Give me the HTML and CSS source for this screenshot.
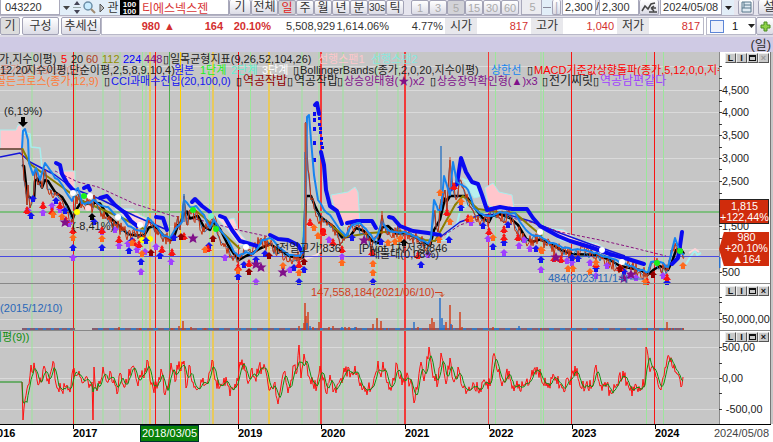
FILE: index.html
```html
<!DOCTYPE html>
<html lang="ko">
<head>
    <meta charset="UTF-8">
    <meta name="viewport" content="width=device-width, initial-scale=1.0">
    <title>티에스넥스젠 043220</title>
    <link rel="stylesheet" href="styles.css">
</head>
<body>
    <div class="toolbar top">
        <input class="code" type="text" value="043220" aria-label="종목코드">
        <button class="tool caret" aria-label="종목 목록"><svg width="7" height="4"><path d="M0 0h7L3.500 4z" fill="#444"/></svg></button>
        <button class="tool spin" aria-label="이전 다음"><svg width="8" height="14"><path d="M1 4h6L4 0zM1 9h6L4 13z" fill="#445"/><path d="M0 6.500h8" stroke="#9aa"/></svg></button>
        <button class="tool find" aria-label="검색"><svg width="13" height="13"><circle cx="5" cy="5" r="4" fill="#c8ecff" stroke="#6d8fa8" stroke-width="1.500"/><path d="M8 8l4 4" stroke="#a08a70" stroke-width="2"/></svg></button>
        <button class="tool next" aria-label="다음"><svg width="6" height="10"><path d="M1 1v8l4-4z" fill="#bbb" stroke="#555"/></svg></button>
        <button class="tool fav">관</button>
        <button class="tool hundred"><span>100</span><span>100</span></button>
        <input class="name" type="text" value="티에스넥스젠" aria-label="종목명">
        <button class="btn w22">기</button>
        <button class="btn w27">전체</button>
        <div class="group periods">
            <button class="on red">일</button><button>주</button><button>월</button><button>년</button><button>분</button><button class="small">30s</button><button>틱</button>
        </div>
        <div class="group minutes">
            <button disabled>1</button><button disabled>3</button><button class="on" disabled>5</button><button disabled>15</button><button disabled>30</button><button disabled>60</button>
        </div>
        <input class="minute" type="text" value="5" disabled aria-label="분 단위">
        <button class="tool spin" aria-label="분 조절"><svg width="8" height="14"><path d="M0 6.500h8" stroke="#889"/></svg></button>
        <button class="btn thin" aria-label="적용">|</button>
        <input class="count" type="text" value="2,300" aria-label="표시 봉수">
        <span class="slash">/</span>
        <input class="count total" type="text" value="2,300" aria-label="전체 봉수">
        <button class="btn w20" aria-label="차트 이동"><svg width="17" height="13"><path d="M1 10l3-5 3 3 3-5 4-1M10 7h5M10 7l3-2M10 7l3 3M8 11h8" fill="none" stroke="#444" stroke-width="1.500"/></svg></button>
        <input class="date" type="text" value="2024/05/08" aria-label="기준일">
        <button class="tool caret" aria-label="날짜 선택"><svg width="7" height="4"><path d="M0 0h7L3.500 4z" fill="#222"/></svg></button>
        <button class="btn print" aria-label="인쇄"><svg width="11" height="12"><path d="M1 1h9v10H1zM3 4h7M1 7h9M3 1v6" fill="#dfeaf2" stroke="#59798c"/></svg></button>
        <button class="btn w22">설</button>
    </div>

    <div class="toolbar quote">
        <button class="btn gray">기</button>
        <button class="btn wide">구성</button>
        <button class="btn wide2">추세선</button>
        <div class="prices">
            <b class="price">980</b><b class="up">▲</b><b class="diff">164</b><b class="rate">20.10%</b>
            <span class="volume">5,508,929</span><span class="ratio">1,614.06%</span><span class="turn">4.77%</span>
            <span class="tag">시가</span><span class="num">817</span>
            <span class="tag">고가</span><span class="num">1,040</span>
            <span class="tag">저가</span><span class="num">817</span>
        </div>
        <div class="layout">
            <label class="swatch"><input type="checkbox" aria-label="분할"></label>
            <select aria-label="분할 개수"><option>1</option></select>
            <svg class="arrow" width="7" height="4"><path d="M0 0h7L3.500 4z" fill="#222"/></svg>
        </div>
        <button class="btn plus" aria-label="추가"><svg width="11" height="11"><path d="M4 1h3v3h3v3H7v3H4V7H1V4h3z" fill="#8fd24a" stroke="#4b8c22"/></svg></button>
    </div>

    <div class="titlebar">(일)</div>

    <main class="chart">
        <section class="pane">
            <svg class="plot" id="price" viewBox="0 52 719 233"></svg>
            <div class="scale">
                <div class="winbtns"><button>L</button><button>I</button><button><i></i></button><button class="off">×</button></div>
                <svg id="priceScale" viewBox="719 52 52 233" preserveAspectRatio="none"></svg>
            </div>
        </section>
        <section class="pane">
            <svg class="plot" id="volume" viewBox="0 285 719 46"></svg>
            <div class="scale">
                <div class="winbtns"><button>L</button><button>I</button><button><i></i></button><button>×</button></div>
                <svg id="volumeScale" viewBox="719 285 52 46" preserveAspectRatio="none"></svg>
            </div>
        </section>
        <section class="pane">
            <svg class="plot" id="cci" viewBox="0 331 719 93"></svg>
            <div class="scale">
                <div class="winbtns"><button>L</button><button>I</button><button><i></i></button><button>×</button></div>
                <svg id="cciScale" viewBox="719 331 52 93" preserveAspectRatio="none"></svg>
            </div>
        </section>
        <svg class="timeline" id="timeline" viewBox="0 424 773 18"></svg>
    </main>

    <script src="chart.js"></script>
</body>
</html>
```
FILE: styles.css
```css
* {
    box-sizing: border-box;
}

body {
    margin: 0;
    background: #e6e5ee;
    font-family: "Liberation Sans", "Noto Sans CJK KR", sans-serif;
    font-size: 11px;
    color: #333;
    overflow: hidden;
}

button,
input,
select {
    font: inherit;
    color: inherit;
    padding: 0;
    margin: 0;
    border: 1px solid #a9a9bb;
    border-radius: 0;
    background: #fff;
    flex: none;
}

button {
    display: flex;
    align-items: center;
    justify-content: center;
    line-height: 12px;
    white-space: nowrap;
}

.toolbar {
    display: flex;
    align-items: stretch;
    overflow: hidden;
    white-space: nowrap;
}

.top {
    height: 16px;
    border-bottom: 1px solid #b5b4c4;
}

.top button,
.top input {
    height: 15px;
    border-top: 0;
}

.top input {
    padding-left: 2px;
    line-height: 14px;
}

.btn,
.group button {
    background: linear-gradient(#fff, #dcdce6);
    border: 1px solid #a3a3b6;
    border-radius: 2px;
    font-size: 12px;
}

.top .code {
    width: 60px;
    padding-left: 4px;
}

.tool {
    background: #e2eef8;
    border: 0;
}

.caret { width: 12px; }
.spin { width: 10px; }
.find { width: 15px; }
.next { width: 9px; }

.fav {
    width: 14px;
    font-size: 12px;
}

.hundred {
    width: 19px;
    flex-direction: column;
    background: #000;
    color: #fff;
    font-size: 8px;
    font-weight: bold;
    line-height: 7px;
}

.name {
    width: 90px;
    color: #d83434;
    font-size: 12px;
}

.w20 { width: 20px; }
.w22 { width: 22px; }
.w27 { width: 27px; }

.group {
    display: flex;
    flex: none;
}

.group button { width: 18px; }

.group .small { font-size: 10px; }

.group .on {
    background: #d3d3d8;
}

.red { color: #e02020; }

.periods {
    margin-right: 7px;
}

.minutes button {
    color: #aaa;
    font-size: 11px;
}

.minute {
    width: 21px;
    margin-left: 2px;
    text-align: center;
    color: #aaa;
    background: #ececf0;
}

.thin {
    width: 9px;
    color: #aab;
    margin-right: 1px;
}

.count {
    width: 34px;
}

.slash {
    width: 9px;
    text-align: center;
}

.total { width: 40px; }

.date {
    width: 62px;
    margin-left: 1px;
}

.print {
    width: 16px;
    margin: 0 4px;
}

.quote {
    height: 20px;
    margin-top: 1px;
    background: #fff;
    border-bottom: 2px solid #dddbe6;
}

.gray {
    width: 20px;
    background: #ddd;
    margin-right: 2px;
}

.wide {
    width: 37px;
    margin-right: 2px;
}

.wide2 { width: 40px; }

.prices {
    flex: 1;
    display: flex;
    align-items: center;
    justify-content: flex-end;
    border: 1px solid #b9b9c8;
    line-height: 16px;
}

.prices b {
    color: #d33030;
    text-align: right;
}

.price { width: 58px; }
.up { width: 15px; }
.diff { width: 48px; }
.rate { width: 48px; }
.volume { width: 64px; text-align: right; }
.ratio { width: 54px; text-align: right; }
.turn { width: 54px; text-align: right; margin-right: 2px; }

.tag {
    width: 32px;
    background: #e8e8ec;
    text-align: center;
    font-size: 12px;
}

.num {
    width: 54px;
    padding-right: 3px;
    text-align: right;
    color: #d33030;
}

.layout {
    display: flex;
    align-items: center;
    width: 52px;
    margin-left: 2px;
    border: 1px solid #b9b9c8;
}

.swatch input {
    display: block;
    appearance: none;
    width: 14px;
    height: 13px;
    margin: 0 8px 0 3px;
    border: 1px solid #5d86d6;
    background: #eef1fb;
}

.layout select {
    appearance: none;
    border: 0;
    width: 16px;
    color: #111;
}

.plus {
    width: 18px;
}

.titlebar {
    height: 15px;
    background: #cfcae4;
    text-align: right;
    padding-right: 2px;
    font-size: 13px;
    line-height: 15px;
}

.chart {
    border-bottom: 1px solid #333;
}

.pane {
    display: grid;
    grid-template-columns: 1fr 52px;
    padding-right: 2px;
    background: #c6c6c6;
}

.plot {
    display: block;
    width: 100%;
    background: #c6c6c6;
}

.scale {
    position: relative;
    background: #fff;
    border-right: 1px solid #777;
}

.scale svg {
    display: block;
    position: absolute;
    width: 100%;
    height: 100%;
}

.winbtns {
    position: absolute;
    z-index: 1;
    top: 1px;
    right: 1px;
    display: flex;
}

.winbtns button {
    width: 11px;
    height: 10px;
    font-size: 9px;
    font-weight: bold;
    line-height: 8px;
    color: #111;
    background: #c9c9c9;
    border: 1px solid #555;
    border-top-color: #eee;
    border-left-color: #eee;
}

.winbtns i {
    width: 7px;
    height: 6px;
    border: 1px solid #111;
    border-top-width: 2px;
}

.winbtns .off {
    color: #999;
}

.timeline {
    display: block;
    width: 100%;
    background: #fff;
}

svg text {
    font-size: 11px;
    white-space: pre;
}

svg .ko {
    font-size: 12px;
}

.year {
    font-weight: bold;
    fill: #000;
}
```
FILE: chart.js
```javascript
const redLines = [73.5, 155.5, 238.5, 321, 405, 488.5, 571.5, 654.5];
const greenLines = [32, 75, 103, 120, 142.5, 146, 209.5, 250.5, 302, 319, 343, 377, 398, 495.5, 541, 543.5, 646.5, 663.5];
const goldLines = [150, 180.5, 213, 269];

function draw(id, html) {
    document.getElementById(id).innerHTML += html;
}

function line(x1, y1, x2, y2, color, width = 1, extra = '') {
    return `<path d="M${x1} ${y1}L${x2} ${y2}" stroke="${color}" stroke-width="${width}" ${extra}/>`;
}

function poly(points, color, width = 1, extra = '') {
    return `<polyline points="${points.join(' ')}" fill="none" stroke="${color}" stroke-width="${width}" stroke-linejoin="round" ${extra}/>`;
}

function area(points, color) {
    return `<polygon points="${points.join(' ')}" fill="${color}" stroke="#a8eeee"/>`;
}

function text(x, y, value, color = '#222', extra = '') {
    return `<text x="${x}" y="${y}" fill="${color}" ${extra}>${value}</text>`;
}

function ko(x, y, value, color = '#222') {
    return text(x, y, value, color, 'class="ko"');
}

// same sequence on every load
let seed = 7;
function rnd() {
    seed = (seed * 16807) % 2147483647;
    return seed / 2147483647;
}

// walk along the points, adding jitter
function jitter(points, amp, step = 1) {
    const out = [];
    for (let i = 0; i < points.length - 1; i++) {
        const [x1, y1] = points[i];
        const [x2, y2] = points[i + 1];
        out.push([x1, y1]);
        for (let x = x1 + step; x < x2; x += step) {
            const y = y1 + (y2 - y1) * (x - x1) / (x2 - x1);
            out.push([x, (y + (rnd() - 0.5) * amp).toFixed(1)]);
        }
    }
    out.push(points[points.length - 1]);
    return out;
}

function smooth(points, span) {
    return points.map((p, i) => {
        const part = points.slice(Math.max(0, i - span), i + 1);
        return [p[0], (part.reduce((s, q) => s + Number(q[1]), 0) / part.length).toFixed(1)];
    });
}

function background(top, bottom, rows) {
    let s = rows.map(y => line(0, y, 719, y, '#dadada')).join('');
    s += greenLines.map(x => line(x, top, x, bottom, '#9be69b')).join('');
    s += goldLines.map((x, i) => line(x, top, x, bottom, i === 1 ? '#ffd000' : '#e8c95c', i === 1 ? 1 : 2)).join('');
    s += redLines.map((x, i) => line(x, top, x, bottom, i > 2 && i < 6 ? '#f23a3a' : '#f81414', i === 3 || i === 4 ? 2 : 1)).join('');
    return s + line(169.5, top, 169.5, bottom, '#50b050');
}

// ---- price ----
const trend = [[22,148],[23,131],[25,129],[28,140],[29,163],[33,175],[36,168],[40,180],[45,163],[50,170],[55,178],[60,182],[66,192],[72,201],[76,190],[78,188],[82,203],[90,203],[94,200],[100,205],[108,207],[116,215],[122,218],[128,226],[136,230],[144,232],[148,218],[152,222],[158,228],[164,236],[170,238],[176,228],[182,222],[184,200],[190,207],[196,206],[204,215],[210,228],[214,220],[220,230],[228,240],[234,252],[238,256],[246,252],[252,254],[258,248],[262,240],[270,238],[280,248],[290,255],[300,256],[303,250],[306,190],[307,117],[309,115],[311,140],[314,175],[318,200],[324,210],[332,218],[340,230],[346,236],[352,225],[360,223],[368,232],[374,240],[378,234],[382,222],[388,230],[395,232],[405,232],[412,235],[420,240],[428,244],[431,238],[434,200],[438,210],[441,210],[444,176],[450,195],[453,162],[457,182],[460,184],[468,190],[474,208],[482,214],[490,216],[500,212],[510,214],[515,213],[520,222],[526,230],[532,235],[540,236],[550,243],[560,246],[572,250],[585,250],[598,254],[610,258],[620,262],[630,266],[640,270],[648,272],[651,262],[660,262],[668,267],[672,250],[675,238],[679,250],[684,255]];

const candles = [[22,150],[24,180],[27,205],[28,185],[30,208],[34,190],[35,170],[38,185],[42,188],[45,170],[48,190],[55,192],[62,200],[68,212],[73,222],[76,196],[82,204],[88,202],[93,208],[94,195],[100,210],[108,220],[116,224],[122,231],[128,235],[136,234],[144,235],[149,218],[155,232],[164,238],[171,240],[174,232],[178,216],[180,230],[184,196],[187,225],[190,210],[198,220],[204,232],[210,226],[213,216],[220,240],[228,248],[234,258],[239,260],[246,250],[252,255],[260,240],[270,246],[280,253],[290,258],[303,255],[305,190],[306,122],[308,170],[311,200],[315,210],[320,221],[328,222],[334,230],[342,243],[350,228],[356,226],[364,234],[372,246],[378,238],[382,215],[388,235],[396,230],[405,234],[415,238],[424,244],[430,246],[434,212],[438,232],[440,205],[445,190],[447,210],[450,160],[453,190],[457,198],[460,180],[466,198],[474,213],[482,220],[489,222],[492,208],[500,218],[510,216],[518,232],[526,243],[532,239],[540,238],[550,246],[560,251],[572,255],[585,252],[598,256],[610,262],[620,268],[630,266],[640,272],[648,275],[654,262],[660,268],[668,270],[672,252],[676,246],[680,248],[684,258]];

// slow average stays below the spikes
const slow = smooth(candles, 1).map(([x, y]) => {
    let top = 165;
    if (x > 300 && x < 316) top = 196;
    if (x > 428 && x < 470) top = 196;
    return [x, Math.max(Number(y) + 1, top)];
});

const spans = [
    [[56,163],[60,165],[62,174],[67,183],[73,190]],
    [[84,188],[88,186],[90,190]],
    [[100,198],[107,196],[115,205],[125,213],[131,221],[137,226]],
    [[156,217],[163,218],[167,230]],
    [[192,202],[195,199],[202,206],[210,212]],
    [[220,216],[225,218],[232,230],[240,241],[257,246]],
    [[270,235],[278,239],[288,240],[298,245],[302,252]],
    [[315,105],[317,103],[319,114]],
    [[321,152],[324,165],[326,190],[330,206],[337,211],[342,224]],
    [[347,223],[357,221],[372,221],[376,228]],
    [[389,217],[393,218],[400,226],[413,231],[428,233],[440,235]],
    [[450,190],[457,184],[461,158],[466,172],[472,182],[478,184],[482,195],[487,210],[500,207],[512,209],[527,209],[533,218],[540,226],[558,236],[570,241],[590,247],[610,254],[628,259],[644,264]],
    [[672,264],[678,258],[680,246],[682,232]]
];

let p = background(52, 285, [66.5, 90.5, 112.5, 135.5, 158.5, 181.5, 204.5, 226.5, 249.5, 272.5]);

// clouds
p += area([[0,130],[16,130],[18,125],[22,125],[22,149],[0,149]], '#ffc6cc');
p += area([[55,171],[75,171],[75,190],[62,178]], '#ffc6cc');
p += area([[115,209],[133,209],[140,215],[150,220],[152,228],[134,226]], '#ffd5d9');
p += area([[215,216],[226,220],[234,218],[239,232],[248,243],[240,246],[226,228]], '#ffd5d9');
p += area([[331,195],[348,192],[355,187],[358,192],[360,223],[350,222],[343,226],[335,212]], '#ffc6cc');
p += area([[462,178],[478,184],[482,196],[474,198]], '#b8f0ee');
p += area([[485,188],[493,183],[499,192],[512,195],[514,208],[497,209],[488,205]], '#ffc6cc');
p += area([[535,221],[546,228],[564,230],[578,240],[598,244],[610,252],[586,247],[560,240]], '#ffd5d9');
p += poly([[22,132],[30,134],[31,147],[40,148],[42,168],[48,172]], '#a8eeee', 1.5);
p += poly([[433,240],[446,240],[449,232],[457,224],[460,211],[470,203]], '#a8eeee', 2);
p += poly([[294,257],[305,259],[317,255],[326,244]], '#f5dcdc', 2);
p += poly([[686,264],[691,256],[695,250],[697,255],[701,253]], '#a8eeee', 2) + poly([[689,253],[695,249],[699,252]], '#ffd5d9', 2);

p += line(0, 212, 719, 212, '#7fbd7f', 2);
p += line(0, 256.5, 719, 256.5, '#4a4ae0', 1);

// moving averages
p += poly([[0,157],[20,153],[30,162],[55,175],[74,189],[100,199],[135,216],[165,229]], '#1414d8', 1.5);
p += poly([[435,241],[460,222],[480,215],[505,214],[530,221],[560,233],[590,244],[625,256]], '#1414d8', 1.5);
p += poly([[55,171],[78,182],[98,187],[135,204],[173,216],[200,220],[238,230],[270,237]], '#8a1480', 1, 'stroke-dasharray="3 2"');
p += poly([[440,238],[460,225],[475,220],[498,215],[530,222],[560,232],[600,240],[630,247],[666,256]], '#8a1480', 1, 'stroke-dasharray="3 2"');
p += poly(slow, '#000', 2.5);
p += poly([[22,148],[30,164],[62,187],[80,200],[122,218],[144,229]], '#8b8000', 2);
p += poly([[195,210],[225,235],[240,249]], '#8b8000', 2);
p += poly([[330,224],[345,237],[370,233],[400,231],[425,240],[435,241],[455,205],[463,196],[478,209],[498,212],[515,213],[530,226],[542,236]], '#8b8000', 2);
p += poly(jitter(candles, 10, 2), '#2870b0', 1);
p += poly(jitter(candles, 14), '#c8320c', 1);
p += poly([[0,149],[22,149]], '#7d5c50', 2);
p += spans.map(s => poly(s, '#0a0af0', 4, 'stroke-linecap="round"')).join('');
p += [113, 119, 128, 142, 159].map(y => `<rect x="313" y="${y - 1}" width="3" height="4" fill="#0a0af0"/>`).join('');
p += [118, 124, 128, 132, 138, 143, 147].map((y, i) => `<rect x="${318 + (i >> 1)}" y="${y - 1}" width="3" height="3" fill="#0a0af0"/>`).join('');
p += poly(jitter(trend, 2, 3), '#1684f0', 2);
p += line(441, 146, 441, 190, '#3a7ac0', 1.5) + line(450, 157, 450, 190, '#c8502c') + line(382, 211, 382, 234, '#c8320c') + line(184, 194, 184, 222, '#3a7ac0', 1.5);
p += line(305.5, 123, 305.5, 250, '#c85030', 2) + line(304.5, 152, 304.5, 245, '#5d7ca8', 1);

// dots on the averages
[[73,193,'#fff'],[84,196,'#1cf01c'],[90,196,'#fff'],[77,212,'#ff0'],[88,208,'#ffd5d9'],[118,217,'#fff'],[140,225,'#fff'],[142,240,'#ff0'],[150,239,'#ff0'],[193,210,'#1cf01c'],[211,216,'#7ff5c8'],[216,229,'#1cf01c'],[246,247,'#fff'],[323,231,'#f00'],[657,263,'#1cf01c'],[680,251,'#1cf01c'],[540,232,'#fff'],[602,250,'#fff'],[622,262,'#fff']].forEach(([x, y, c]) => {
    p += `<circle cx="${x}" cy="${y}" r="3" fill="${c}"/>`;
});

// signals: b/p/r/o/d = arrows, s = star
const colors = { b: '#1414f0', p: '#a040ff', r: '#f81414', o: '#ff6a1c', d: '#900000', s: '#80108a', k: '#000' };
function signal(kind, x, y) {
    const c = colors[kind];
    if (kind === 's') return `<path d="M${x} ${y - 5}l1.500 3.500h4l-3 2.500 1 4-3.500-2-3.500 2 1-4-3-2.500h4z" fill="${c}"/>`;
    if (kind === 'r') return `<path d="M${x} ${y - 4}l2 3h-1l3 4h-2v1h-4v-1h-2l3-4h-1z" fill="${c}"/>`;
    return `<path d="M${x} ${y - 4}l4 4h-2v3h-4v-3h-2z" fill="${c}"/>`;
}
const signals = {
    p: [[28,211],[43,213],[52,206],[60,210],[69,224],[73,258],[102,232],[115,230],[119,246],[128,244],[137,250],[141,272],[145,252],[156,247],[171,262],[225,258],[256,282],[290,270],[329,240],[342,257],[428,255],[471,223],[488,239],[504,253],[519,246],[524,240],[530,249],[541,270],[567,261],[572,263],[590,263],[596,276],[607,266],[630,276],[636,278],[663,276]],
    b: [[33,199],[31,216],[56,201],[65,211],[73,248],[94,222],[102,248],[129,251],[132,241],[141,262],[146,241],[160,256],[174,238],[209,246],[238,277],[244,265],[256,260],[265,254],[294,268],[299,282],[304,270],[352,238],[373,282],[381,242],[421,265],[449,240],[461,208],[483,226],[493,247],[504,243],[508,225],[536,249],[541,260],[572,258],[578,259],[596,269],[624,272],[667,283]],
    r: [[27,210],[43,205],[52,211],[60,205],[66,220],[73,230],[102,230],[119,239],[134,242],[139,244],[162,249],[172,252],[184,236],[208,248],[238,267],[249,263],[299,264],[310,222],[323,232],[333,242],[342,249],[372,252],[418,255],[447,212],[454,186],[468,218],[489,231],[504,229],[504,237],[518,237],[554,258],[561,259],[596,264],[620,268],[647,281],[667,277]],
    o: [[53,215],[62,217],[73,238],[102,239],[132,243],[142,254],[205,250],[238,271],[283,266],[299,273],[314,228],[318,236],[342,263],[373,264],[373,273],[388,243],[395,242],[400,239],[439,240],[440,193],[450,222],[461,202],[471,219],[493,238],[541,250],[542,251],[568,269],[573,269],[590,272],[596,263],[645,282],[683,266]],
    d: [[151,253],[181,237],[213,239],[249,272],[269,256],[304,262],[620,269],[653,275]],
    s: [[65,222],[193,238],[256,264],[261,267],[283,272],[364,240],[556,257],[624,278],[631,274]],
    k: [[92,217],[404,243]]
};
for (const kind in signals) {
    p += signals[kind].map(([x, y]) => signal(kind, x, y)).join('');
}

p += '<path d="M21 117h4v5h3l-5 5-5-5h3z" fill="#000"/>';
p += text(4, 115, '(6,19%)') + text(72, 230, '(-8,41%)');
p += text(276, 252, '[전일고가]836') + text(359, 252, '[Pivot 1차저항]846') + text(370, 258, '매물대(0,08%)');
p += text(548, 282, '484(2023/11/14)', '#2a68b8') + line(630, 279, 644, 279, '#2a68b8');
p += line(0, 283.5, 719, 283.5, '#888');

// indicator names
const box = '▯';
p += text(-1, 63, '가,지수이평)') + text(61, 63, '5', '#f00') + text(71, 63, '20') + text(86, 63, '60', '#b03a20') + text(102, 63, '112', '#909000') + text(123, 63, '224', '#00f') + text(144, 63, '448', '#80108a');
p += text(163, 63, box, '#000') + text(170, 63, '일목균형지표(9,26,52,104,26)') + text(318, 63, '선행스팬1', '#ffc6cc') + text(371, 63, '선행스팬2', '#86e8e0');
p += text(0, 74, '종가(2015/12/09)', '#e06a50', 'opacity=".600"') + text(0, 74, '12,20') + text(26, 74, '지수이평,단순이평,2,5,8,9,10,4)') + text(174, 74, '원본', '#1414f0') + text(200, 74, '1단계', '#1cf01c') + text(231, 74, '2단계', '#60f0d0') + text(262, 74, '3단계', '#fff');
p += text(293, 74, box, '#000') + text(300, 74, 'BollingerBands(종가,2,0,20,지수이평)') + text(491, 74, '상한선', '#1684f0') + text(527, 74, box, '#000') + text(534, 74, 'MACD기준값상향돌파(종가,5,12,0,0,지수)', '#f00');
p += text(-4, 85, '골든크로스(종가,12,9)', '#ff7a38') + text(104, 85, box, '#000') + text(111, 85, 'CCI과매수진입(20,100,0)', '#1414f0') + text(236, 85, box, '#000') + ko(243, 85, '역공작밥', '#900000') + text(287, 85, box, '#000') + ko(294, 85, '역공작밥') + text(337, 85, box, '#000') + text(344, 85, '상승잉태형(★)x2', '#80108a') + text(430, 85, box, '#000') + text(437, 85, '상승장악확인형(▲)x3', '#80108a') + text(542, 85, box, '#000') + ko(549, 85, '전기찌릿') + text(593, 85, box, '#000') + ko(600, 85, '역공남편같다', '#a040ff');
draw('price', p);

// ---- volume ----
let v = background(285, 331, [297.5, 319.5]);
v += line(22, 329, 75, 329, '#3a78c0', 2) + line(92, 329, 684, 329, '#3a78c0', 2);
v += line(22, 329, 75, 329, '#d04020', 1, 'stroke-dasharray="5 3"') + line(92, 329, 684, 329, '#d04020', 1, 'stroke-dasharray="6 5"');
[[119,327],[140,328],[172,328],[179,326],[183,321],[191,327],[205,328],[299,326],[304,323],[305,303],[306,316],[308,312],[313,327],[319,322],[329,327],[333,326],[345,327],[349,327],[356,327],[373,324],[377,318],[381,321],[387,328],[418,327],[430,324],[432,318],[434,322],[446,322],[450,305],[452,325],[460,312],[462,327],[493,327],[541,328],[647,328],[667,322],[670,328],[673,328],[683,328]].forEach(([x, y]) => {
    v += line(x, 330, x, y, '#d0401c', 1.5);
});
[[307,323],[310,326],[315,328],[342,327],[355,327],[414,322],[440,298],[442,318],[444,325],[451,324],[519,326]].forEach(([x, y]) => {
    v += line(x, 330, x, y, '#2a70c8', 1.5);
});
v += text(-6, 312, '0(2015/12/10)', '#2a68b8');
v += text(311, 296, '147,558,184(2021/06/10)', '#d0401c') + '<path d="M435 292.500h7v4m-2-2l2 2 2-2" fill="none" stroke="#d0401c"/>';
v += line(0, 330.5, 719, 330.5, '#888');
draw('volume', v);

// ---- cci ----
const cci = [[22,382],[23,420],[25,400],[28,385],[31,365],[35,370],[38,385],[42,380],[44,366],[49,384],[54,363],[56,384],[61,390],[66,387],[71,386],[74,368],[78,375],[84,382],[92,382],[93,420],[94,367],[96,388],[101,380],[103,367],[107,382],[111,373],[117,394],[120,373],[125,387],[132,367],[137,382],[140,375],[144,378],[147,360],[150,380],[153,388],[158,383],[161,369],[165,395],[169,380],[171,363],[176,380],[177,365],[181,371],[184,361],[186,388],[190,366],[193,382],[197,390],[203,378],[206,384],[209,373],[212,360],[215,380],[220,387],[227,382],[230,396],[235,384],[238,381],[239,369],[244,363],[249,381],[251,370],[255,378],[259,366],[266,372],[270,390],[275,382],[278,404],[281,386],[284,372],[288,393],[294,366],[297,372],[299,345],[301,378],[304,354],[308,376],[313,384],[317,386],[320,366],[326,393],[330,375],[333,392],[337,385],[342,383],[344,368],[351,373],[355,366],[360,386],[368,389],[373,385],[376,372],[378,361],[381,377],[383,362],[387,383],[392,386],[397,364],[402,385],[406,378],[412,385],[414,403],[418,384],[421,362],[424,381],[429,347],[432,370],[438,383],[441,353],[446,384],[450,358],[453,380],[459,370],[463,388],[468,391],[474,384],[480,388],[487,382],[490,386],[493,356],[498,372],[502,386],[509,371],[514,391],[519,384],[523,386],[530,380],[537,367],[541,378],[546,386],[556,378],[564,392],[567,378],[570,385],[575,366],[581,388],[586,384],[592,386],[596,365],[601,385],[610,390],[617,384],[623,371],[629,388],[634,391],[641,388],[645,382],[646,347],[649,366],[656,377],[661,390],[664,376],[667,360],[670,362],[676,372],[681,387],[683,377]];
const cciLine = jitter(cci, 13);
const cciSignal = smooth(cciLine, 4);
let c = background(331, 424, [347.5, 378.5, 409.5]);
c += poly([[0, 382], [22, 382]], '#109010', 1);
c += poly(cciLine, '#ff1010', 1);
c += poly(cciSignal, '#109010', 1);
c += text(-8, 341, '이평(9))', '#109010');
draw('cci', c);

// ---- scales ----
function ticks(list) {
    return line(719.5, 0, 719.5, 442, '#888') + list.map(y => line(719, y, 722, y, '#333')).join('');
}
let s = ticks([66.5, 78.5, 90.5, 101.5, 112.5, 124.5, 135.5, 147.5, 158.5, 169.5, 181.5, 193.5, 226.5, 238.5, 272.5]);
[['4,500', 94], ['4,000', 116], ['3,500', 139], ['3,000', 162], ['2,500', 185], ['1,500', 230], ['500', 276]].forEach(([t, y]) => {
    s += text(722, y, t);
});
s += '<rect x="719.500" y="199.500" width="50" height="24" fill="#d02c0c" stroke="#222"/>';
s += text(745, 210, '1,815', '#fff', 'text-anchor="middle"') + text(745, 221, '+122,44%', '#fff', 'text-anchor="middle"');
s += '<path d="M719 249l5-17h46v34h-46z" fill="#d02c0c"/>' + line(719.5, 257, 719.5, 268, '#2a70c8', 2);
s += text(747, 241, '980', '#fff', 'text-anchor="middle"') + text(747, 252, '+20,10%', '#fff', 'text-anchor="middle"') + text(747, 263, '▲164', '#fff', 'text-anchor="middle"');
s += line(719, 283.5, 771, 283.5, '#888');
draw('priceScale', s);
draw('volumeScale', ticks([297.5, 302.5, 313.5, 319.5]) + text(722, 323, '50,000,000') + line(719, 330.5, 771, 330.5, '#888'));
draw('cciScale', ticks([347.5, 363.5, 378.5, 393.5, 409.5]) + text(722, 351, '500,00') + text(722, 382, '0,00') + text(726, 413, '-500,00'));

// ---- time axis ----
let t = line(0, 424.5, 771, 424.5, '#000');
[[-9, 2016], [73, 2017], [238, 2019], [321, 2020], [405, 2021], [489, 2022], [572, 2023], [655, 2024]].forEach(([x, year]) => {
    t += line(x + 0.5, 424, x + 0.5, 429, '#000') + text(x, 437, year, '#000', 'class="year"');
});
t += '<rect x="140.500" y="425.500" width="58" height="16" fill="#088008" stroke="#033"/>' + text(142, 437, '2018/03/05', '#fff');
t += text(714, 437, '2024/05/08', '#444');
draw('timeline', t);
```
